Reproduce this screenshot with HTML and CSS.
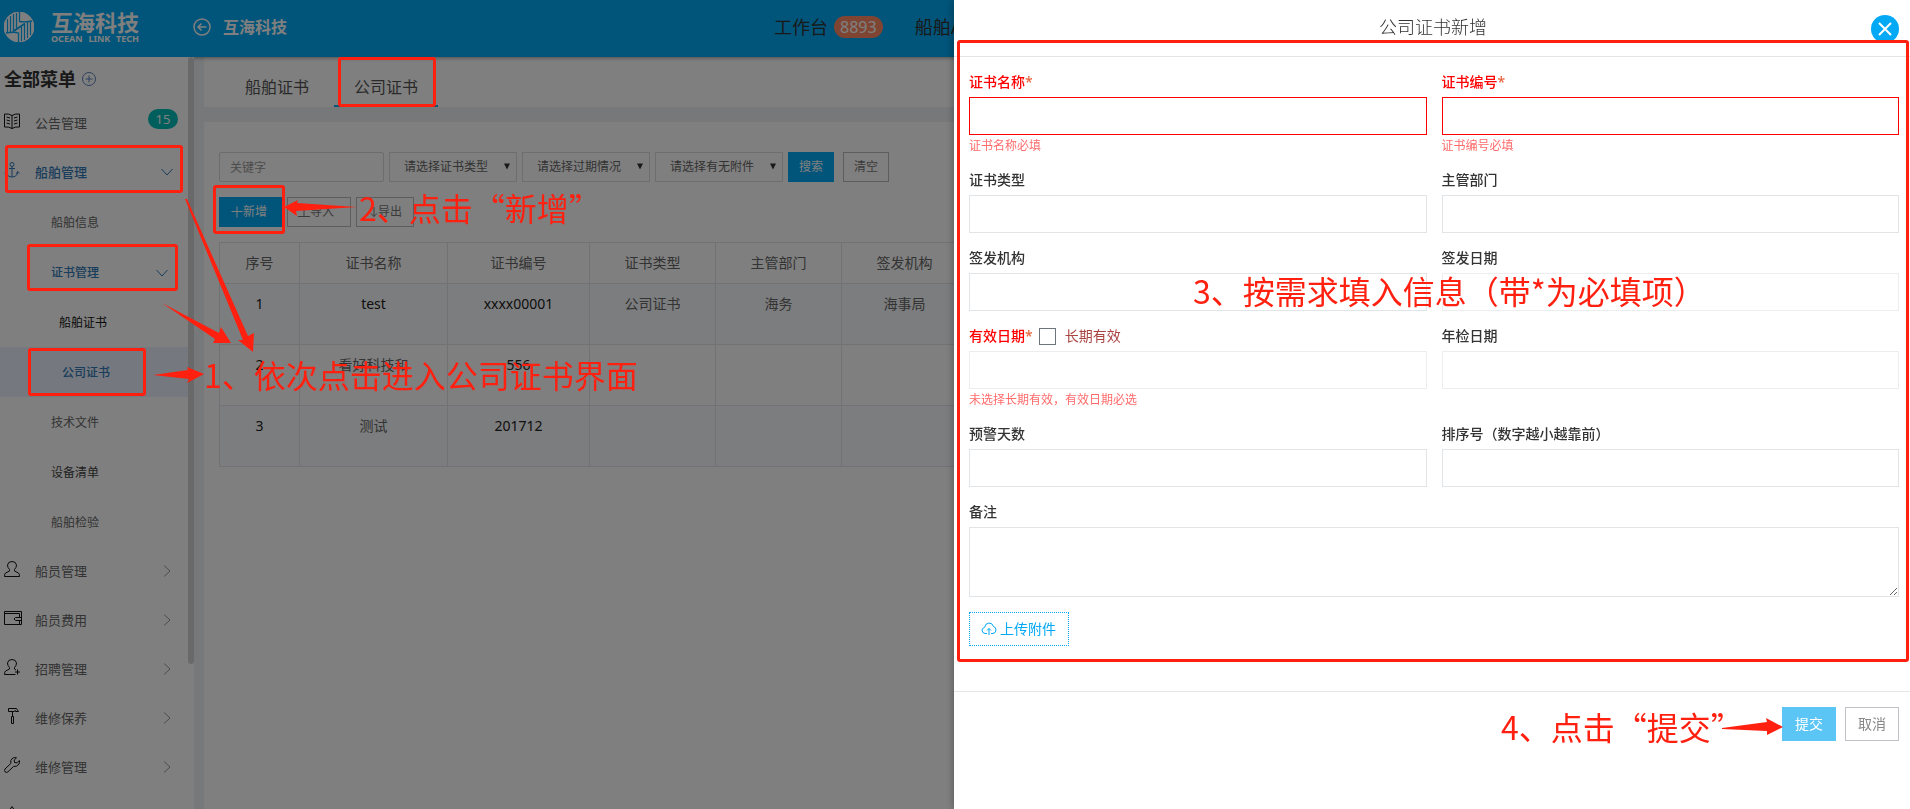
FILE: index.html
```html
<!DOCTYPE html>
<html lang="zh-CN">
<head>
<meta charset="utf-8">
<title>公司证书新增</title>
<link rel="stylesheet" href="styles.css">
</head>
<body>
<div class="app">
  <header class="topbar">
    <div class="logo">
      <svg class="logo-mark" viewBox="0 0 30 30" aria-hidden="true">
        <circle cx="15" cy="15" r="15" fill="#fff"/>
        <g fill="none" stroke="#03a9f4">
          <path d="M15.500 0V9.500Q20 10.500 28 9" stroke-width="1.300"/>
          <path d="M14.500 30V21Q10 19.500 2 21" stroke-width="1.300"/>
          <path d="M3.500 7V21M6.500 4V20M9.500 2V19M12.500 1V16" stroke-width="1.200"/>
          <path d="M26.500 9V23M23.500 10V26M20.500 12V28M17.500 15V29" stroke-width="1.200"/>
          <path d="M9 19.500L21 11.500" stroke-width="1.800"/>
        </g>
      </svg>
      <div class="logo-text">
        <strong>互海科技</strong>
        <div class="logo-sub"><span>OCEAN</span><span>LINK</span><span>TECH</span></div>
      </div>
    </div>
    <a class="back" href="#">
      <svg width="18" height="18" viewBox="0 0 18 18" fill="none" stroke="#fff" stroke-width="1.500" aria-hidden="true"><circle cx="9" cy="9" r="8"/><path d="M13.500 9H5M8.500 5.500L5 9L8.500 12.500"/></svg>
      <span>互海科技</span>
    </a>
    <nav class="topnav">
      <a href="#">工作台 <span class="count">8893</span></a>
      <a href="#">船舶A</a>
    </nav>
  </header>

  <div class="body">
    <aside class="sidebar">
      <div class="menu-title">全部菜单
        <svg width="16" height="16" viewBox="0 0 16 16" fill="none" aria-hidden="true"><circle cx="8" cy="8" r="6.500"/><path d="M8 4.500V11.500M4.500 8H11.500"/></svg>
      </div>
      <ul class="menu">
        <li><a class="item" href="#">
          <svg class="icon" viewBox="0 0 16 16"><path d="M8 2.500Q5 .5.5 1V14Q5 13.500 8 15.500Q11 13.500 15.500 14V1Q11 .5 8 2.500V15.500M2.500 4L6 5M2.500 7L6 8M2.500 10L6 11M13.500 4L10 5M13.500 7L10 8M13.500 10L10 11"/></svg>
          <span class="label">公告管理</span><span class="badge">15</span></a></li>
        <li><a class="item open" href="#">
          <svg class="icon" viewBox="0 0 16 16"><circle cx="8" cy="2.500" r="2"/><path d="M8 4.500V15M5 6.500H11M.5 11L2.500 9.500L3.500 12M12.500 12L13.500 9.500L15.500 11M2 10.500Q3.500 15 8 15Q12.500 15 14 10.500"/></svg>
          <span class="label">船舶管理</span>
          <svg class="chev" viewBox="0 0 12 12"><path d="M.5 3L6 9L11.500 3"/></svg></a>
          <ul class="sub">
            <li><a href="#">船舶信息</a></li>
            <li><a class="open" href="#"><span class="label">证书管理</span><svg class="chev" viewBox="0 0 12 12"><path d="M.5 3L6 9L11.500 3"/></svg></a>
              <ul class="leaf">
                <li><a href="#">船舶证书</a></li>
                <li><a class="current" href="#">公司证书</a></li>
              </ul></li>
            <li><a href="#">技术文件</a></li>
            <li><a class="dark" href="#">设备清单</a></li>
            <li><a href="#">船舶检验</a></li>
          </ul></li>
        <li><a class="item" href="#">
          <svg class="icon" viewBox="0 0 16 16"><path d="M5.500 10V8.500Q3.500 6.500 3.500 4Q4 .5 8 .5Q12 .5 12.500 4Q12.500 6.500 10.500 8.500V10L14.500 12Q15.500 13 15.500 15.500H.5Q.5 13 1.500 12Z"/></svg>
          <span class="label">船员管理</span><svg class="chev" viewBox="0 0 12 12"><path d="M3 .5L9 6L3 11.500"/></svg></a></li>
        <li><a class="item" href="#">
          <svg class="icon wallet" viewBox="0 0 18 16"><path d="M.5 1.500H17.500V14.500H.5ZM.5 3.500H15.500V7.500M15.500 10.500V14M17.500 7.500H11.500L10 9L11.500 10.500H17.500"/></svg>
          <span class="label">船员费用</span><svg class="chev" viewBox="0 0 12 12"><path d="M3 .5L9 6L3 11.500"/></svg></a></li>
        <li><a class="item" href="#">
          <svg class="icon" viewBox="0 0 16 16"><path d="M11.500 15.500H.5Q.5 13 1.500 12L5.500 10V8.500Q3.500 6.500 3.500 4Q4 .5 8 .5Q12 .5 12.500 4Q12.500 6.500 10.500 8.500V10L12 11M13.500 10.500V15.500M11 13H16"/></svg>
          <span class="label">招聘管理</span><svg class="chev" viewBox="0 0 12 12"><path d="M3 .5L9 6L3 11.500"/></svg></a></li>
        <li><a class="item" href="#">
          <svg class="icon" viewBox="0 0 16 16"><path d="M4.500.5H12.500L14.500 3.500H11.500V2.500L10 3.500H4.500ZM8.500 3.500V8M7.500 8.500H9.500V15.500H7.500Z"/></svg>
          <span class="label">维修保养</span><svg class="chev" viewBox="0 0 12 12"><path d="M3 .5L9 6L3 11.500"/></svg></a></li>
        <li><a class="item" href="#">
          <svg class="icon" viewBox="0 0 16 16"><path d="M12.500.8Q8.500-.2 6.800 3.500V6.500L1 12Q0 13.500 1.200 15Q2.800 16 4 14.800L9.500 9.500Q13 10 15 7Q15.800 5 15.300 3.500L13 5.800L10.500 5.500L10.200 3Z"/></svg>
          <span class="label">维修管理</span><svg class="chev" viewBox="0 0 12 12"><path d="M3 .5L9 6L3 11.500"/></svg></a></li>
        <li><a class="item" href="#">
          <svg class="icon" viewBox="0 0 16 16"><path d="M8 .5L11 5V15.500H5V5Z"/></svg></a></li>
      </ul>
      <div class="scrollthumb"></div>
    </aside>

    <main class="main">
      <nav class="tabs">
        <a href="#">船舶证书</a>
        <a class="active" href="#">公司证书</a>
      </nav>
      <section class="panel">
        <form class="filters">
          <input class="keyword" type="text" placeholder="关键字" aria-label="关键字">
          <div class="pick"><select aria-label="证书类型"><option>请选择证书类型</option></select><svg viewBox="0 0 8 7"><path d="M1 .5H7L4 6.500Z"/></svg></div>
          <div class="pick"><select aria-label="过期情况"><option>请选择过期情况</option></select><svg viewBox="0 0 8 7"><path d="M1 .5H7L4 6.500Z"/></svg></div>
          <div class="pick"><select aria-label="有无附件"><option>请选择有无附件</option></select><svg viewBox="0 0 8 7"><path d="M1 .5H7L4 6.500Z"/></svg></div>
          <button class="btn primary" type="button">搜索</button>
          <button class="btn clear" type="button">清空</button>
        </form>
        <div class="actions">
          <button class="btn primary" type="button"><svg viewBox="0 0 12 12"><path d="M6 .5V11.500M.5 5.500H11.500"/></svg>新增</button>
          <button class="btn" type="button"><svg viewBox="0 0 12 12"><path d="M6 10V1M3.500 3.500L6 1L8.500 3.500M0 10.500H12"/></svg>导入</button>
          <button class="btn export" type="button"><svg viewBox="0 0 8 12"><path d="M4 1V10.500M1 7.500L4 10.500L7 7.500"/></svg>导出</button>
        </div>
        <table class="grid">
          <colgroup><col class="c-no"><col class="c-name"><col class="c-code"><col class="c-mid"><col class="c-mid"><col class="c-mid"><col></colgroup>
          <thead><tr><th>序号</th><th>证书名称</th><th>证书编号</th><th>证书类型</th><th>主管部门</th><th>签发机构</th><th></th></tr></thead>
          <tbody>
            <tr><td>1</td><td>test</td><td>xxxx00001</td><td class="soft">公司证书</td><td class="soft">海务</td><td class="soft">海事局</td><td></td></tr>
            <tr><td>2</td><td class="soft">看好科技和</td><td>556</td><td></td><td></td><td></td><td></td></tr>
            <tr><td>3</td><td class="soft">测试</td><td>201712</td><td></td><td></td><td></td><td></td></tr>
          </tbody>
        </table>
      </section>
    </main>
  </div>
</div>

<div class="mask"></div>

<section class="drawer" role="dialog" aria-labelledby="drawer-title">
  <header class="drawer-head">
    <h2 id="drawer-title">公司证书新增</h2>
    <button class="close" type="button" aria-label="关闭"><svg viewBox="0 0 28 28"><path d="M8 8L20 20M20 8L8 20"/></svg></button>
  </header>
  <form class="drawer-form">
    <div class="field invalid"><label for="f-name">证书名称<i>*</i></label><input id="f-name" type="text"><p class="error">证书名称必填</p></div>
    <div class="field invalid"><label for="f-code">证书编号<i>*</i></label><input id="f-code" type="text"><p class="error">证书编号必填</p></div>
    <div class="field"><label for="f-type">证书类型</label><input id="f-type" type="text"></div>
    <div class="field"><label for="f-dept">主管部门</label><input id="f-dept" type="text"></div>
    <div class="field"><label for="f-org">签发机构</label><input id="f-org" type="text"></div>
    <div class="field"><label for="f-issued">签发日期</label><input class="date" id="f-issued" type="text"></div>
    <div class="field">
      <div class="label-row"><label class="required" for="f-valid">有效日期<i>*</i></label><input id="f-long" type="checkbox"><label class="long" for="f-long">长期有效</label></div>
      <input class="date" id="f-valid" type="text"><p class="error">未选择长期有效，有效日期必选</p></div>
    <div class="field"><label for="f-check">年检日期</label><input class="date" id="f-check" type="text"></div>
    <div class="field"><label for="f-warn">预警天数</label><input id="f-warn" type="text"></div>
    <div class="field"><label for="f-sort">排序号（数字越小越靠前）</label><input id="f-sort" type="text"></div>
    <div class="field wide"><label for="f-note">备注</label><textarea id="f-note"></textarea></div>
    <button class="upload" type="button"><svg viewBox="0 0 16 14"><path d="M6 11.500H4Q1 11 1 8Q1.200 6 3.500 5.500Q4 1.500 8 1Q11.500 1 12.500 4.500Q15 5 15 8Q14.800 11 12 11.500H10M8 13V6.500M6 8.500L8 6.500L10 8.500"/></svg>上传附件</button>
  </form>
  <footer class="drawer-foot">
    <button class="submit" type="button">提交</button>
    <button class="cancel" type="button">取消</button>
  </footer>
</section>

<div class="notes">
  <div class="frame frame-ship"></div>
  <div class="frame frame-cert"></div>
  <div class="frame frame-company"></div>
  <div class="frame frame-tab"></div>
  <div class="frame frame-add"></div>
  <div class="frame frame-form"></div>
  <svg class="arrows" width="1910" height="809" viewBox="0 0 1910 809" aria-hidden="true">
    <path d="M185 199L187 199L248 336L254 333L253 352L238 340L243 340Z"/>
    <path d="M162 303L219 333L221 327L231 343L213 343L215 339Z"/>
    <path d="M153 375L188 370L187 367L204 374L187 383L189 379Z"/>
    <path d="M357 207L297 203L298 200L284 207L297 216L296 211Z"/>
    <path d="M1722 728L1767 722L1766 718L1783 727L1767 735L1767 731L1722 729Z"/>
  </svg>
  <p class="step step-1">1、依次点击进入公司证书界面</p>
  <p class="step step-2">2、点击“新增”</p>
  <p class="step step-3">3、按需求填入信息（带*为必填项）</p>
  <p class="step step-4">4、点击“提交”</p>
</div>
</body>
</html>
```

FILE: styles.css
```css
* { box-sizing: border-box; }
body {
  margin: 0;
  height: 100vh;
  overflow: hidden;
  font: 14px/20px "Noto Sans", "Noto Sans CJK SC", sans-serif;
  color: #333;
}
a { color: inherit; text-decoration: none; }
ul { list-style: none; margin: 0; padding: 0; }
p, h2 { margin: 0; }
button, input, select, textarea { font: inherit; color: inherit; border-radius: 0; }
svg { fill: none; stroke: currentColor; flex: none; }

.app { height: 100vh; display: flex; flex-direction: column; }

.topbar {
  flex: none;
  height: 57px;
  display: flex;
  align-items: center;
  padding: 0 0 3px 4px;
  background: #03a9f4;
  box-shadow: 0 1px 4px rgba(0, 0, 0, .4);
  position: relative;
}
.logo { display: flex; align-items: center; gap: 17px; color: #fff; }
.logo-mark { width: 30px; height: 30px; }
.logo-text strong { display: block; font-size: 22px; line-height: 24px; }
.logo-sub { display: flex; justify-content: space-between; font-size: 9px; line-height: 10px; font-weight: 700; }
.back { display: flex; align-items: center; gap: 12px; margin-left: 54px; color: #fff; font-size: 16px; font-weight: 700; }
.topnav { display: flex; gap: 32px; margin-left: 487px; font-size: 18px; white-space: nowrap; }
.topnav a { display: flex; align-items: center; gap: 6px; }
.count { padding: 0 6px; border-radius: 11px; background: #ff8a65; color: #fff; font-size: 16px; line-height: 22px; }

.body { flex: 1; min-height: 0; display: flex; gap: 10px; background: #eff1f5; }
.sidebar { flex: none; width: 194px; overflow: hidden; position: relative; background: #fff; }
.menu-title { height: 42px; display: flex; align-items: center; gap: 5px; padding: 2px 0 0 4px; font-size: 18px; font-weight: 700; }
.menu-title svg { color: #5c82b8; }
.menu { width: 188px; color: #666; }
.item { display: flex; align-items: center; height: 49px; padding: 0 15px 2px 4px; font-size: 13px; }
.item .label { margin-left: 15px; flex: 1; }
.icon { width: 16px; height: 16px; margin-bottom: 3px; color: #111; }
.wallet { width: 18px; }
.item .wallet + .label { margin-left: 13px; }
.chev { width: 12px; height: 12px; color: #999; }
.badge { margin: 0 -5px 8px 0; width: 30px; border-radius: 10px; background: #00bfb8; color: #fff; text-align: center; line-height: 20px; }
.open { color: #337ab7; font-weight: 500; }
.open .icon, .open .chev { color: #337ab7; }
.sub { font-size: 12px; }
.sub a { display: flex; align-items: center; justify-content: space-between; height: 50px; padding: 2px 20px 0 51px; }
.sub .leaf a { padding-left: 59px; color: #111; }
.sub .leaf .current { padding-left: 62px; background: #eaf1fc; color: #337ab7; font-weight: 500; }
.sub .dark { color: #444; }
.scrollthumb { position: absolute; top: 0; right: 0; width: 6px; height: 607px; border-radius: 3px; background: #d2d2d2; }

.main { flex: 1; min-width: 0; display: flex; flex-direction: column; gap: 15px; }
.tabs { display: flex; gap: 5px; padding-left: 21px; background: #fff; font-size: 16px; color: #555; }
.tabs a { height: 50px; padding: 20px 20px 8px; border-bottom: 2px solid transparent; }
.tabs .active { border-color: #03a9f4; }
.panel { flex: 1; padding: 30px 15px; background: #fff; font-size: 12px; }
.filters { display: flex; gap: 5px; }
.keyword { width: 165px; height: 30px; padding: 0 10px; border: 1px solid #d8d8d8; border-radius: 2px; background: #fff; }
.keyword::placeholder { color: #999; }
.pick { position: relative; width: 128px; }
.pick select { appearance: none; width: 100%; height: 30px; padding: 0 14px; border: 1px solid #dcdcdc; background: #fff; color: #666; }
.pick svg { position: absolute; right: 6px; top: 11px; width: 8px; height: 7px; fill: #333; stroke: none; pointer-events: none; }
.btn { display: flex; align-items: center; height: 30px; padding: 0 10px; border: 1px solid #bbb; background: #fff; color: #777; }
.btn.primary { border-color: #03a9f4; background: #03a9f4; color: #fff; }
.btn svg { width: 12px; height: 12px; }
.btn.clear { margin-left: 4px; }
.actions { display: flex; gap: 5px; margin: 15px 0; }
.actions .btn { padding: 0 16px 0 10px; }
.actions .btn.primary { padding: 0 14px 0 11px; }
.actions .btn.export { padding: 0 11px 0 13px; }
.actions .export svg { width: 8px; }

.grid { width: 100%; table-layout: fixed; border-collapse: collapse; font-size: 14px; color: #222; }
.grid th, .grid td { border: 1px solid #e4e5ea; padding: 10px 5px; text-align: center; vertical-align: top; font-weight: 400; }
.grid th { height: 41px; color: #666; }
.grid td { height: 61px; }
.grid .soft { color: #666; }
.grid tbody tr:nth-child(odd) { background: #f9fafc; }
.c-no { width: 80px; }
.c-name { width: 148px; }
.c-code { width: 142px; }
.c-mid { width: 126px; }

.mask { position: fixed; inset: 0; background: rgba(0, 0, 0, .5); }

.drawer {
  position: fixed;
  top: 0;
  right: 0;
  bottom: 0;
  width: calc(50% + 1px);
  background: #fff;
  box-shadow: 0 0 8px rgba(0, 0, 0, .35);
}
.drawer-head { display: flex; align-items: center; height: 57px; padding: 2px 11px 0 41px; border-bottom: 1px solid #e4e4e4; }
.drawer-head h2 { flex: 1; padding-bottom: 4px; text-align: center; font-size: 18px; font-weight: 300; }
.close { width: 28px; height: 28px; padding: 0; border: 0; border-radius: 50%; background: #03a9f4; color: #fff; }
.close svg { display: block; stroke-width: 2; }
.drawer-form { display: grid; grid-template-columns: 1fr 1fr; gap: 15px; padding: 15px 11px 45px 15px; border-bottom: 1px solid #e4e6e8; }
.field { display: flex; flex-direction: column; }
.field label { margin-bottom: 5px; font-weight: 500; }
.field label i { color: #e7633c; font-style: normal; }
.field input[type="text"] { height: 38px; padding: 0 10px; border: 1px solid #e2e5e8; }
.field input.date { border-color: #ebedef; }
.field.invalid label, .field .required { color: #f00; }
.field.invalid input[type="text"] { border-color: #f00; }
.error { padding-top: 2px; color: #ff6b6b; font-size: 12px; line-height: 18px; }
.label-row { display: flex; align-items: center; height: 25px; }
.label-row input { appearance: none; width: 17px; height: 17px; margin: 0 9px 5px 6px; border: 1px solid #6c757d; }
.field .long { color: #a94442; font-weight: 400; }
.wide { grid-column: 1 / -1; }
.wide textarea { height: 70px; border: 1px solid #e2e5e8; resize: vertical; }
.upload { justify-self: start; display: flex; align-items: center; gap: 3px; height: 34px; padding: 0 12px 0 11px; border: 1px dotted #03a9f4; background: #fff; color: #03a9f4; }
.upload svg { width: 16px; height: 14px; }
.drawer-foot { display: flex; justify-content: flex-end; gap: 9px; padding: 15px 11px; }
.drawer-foot button { height: 34px; padding: 0 12px; border: 1px solid #c2c3c8; background: #fff; color: #888; }
.drawer-foot .submit { border-color: #5bc5f6; background: #5bc5f6; color: #fff; }

/* Tutorial callouts drawn over the screen */
.notes { position: fixed; inset: 0; pointer-events: none; color: #ff2010; }
.frame { position: absolute; border: 3px solid #ff2010; border-radius: 3px; }
.frame-ship { left: 5px; top: 145px; width: 178px; height: 48px; }
.frame-cert { left: 27px; top: 244px; width: 151px; height: 47px; }
.frame-company { left: 28px; top: 348px; width: 118px; height: 48px; }
.frame-tab { left: 338px; top: 57px; width: 98px; height: 50px; }
.frame-add { left: 213px; top: 185px; width: 72px; height: 49px; }
.frame-form { left: calc(50% + 2px); right: 1px; top: 40px; height: 622px; }
.arrows { position: absolute; left: 0; top: 0; fill: #ff2010; stroke: none; }
.step { position: absolute; font: 32px/40px "Noto Sans CJK SC", sans-serif; white-space: nowrap; }
.step-1 { left: 204px; top: 354px; }
.step-2 { left: 359px; top: 187px; }
.step-3 { left: 1193px; top: 270px; }
.step-4 { left: 1501px; top: 706px; }
```
